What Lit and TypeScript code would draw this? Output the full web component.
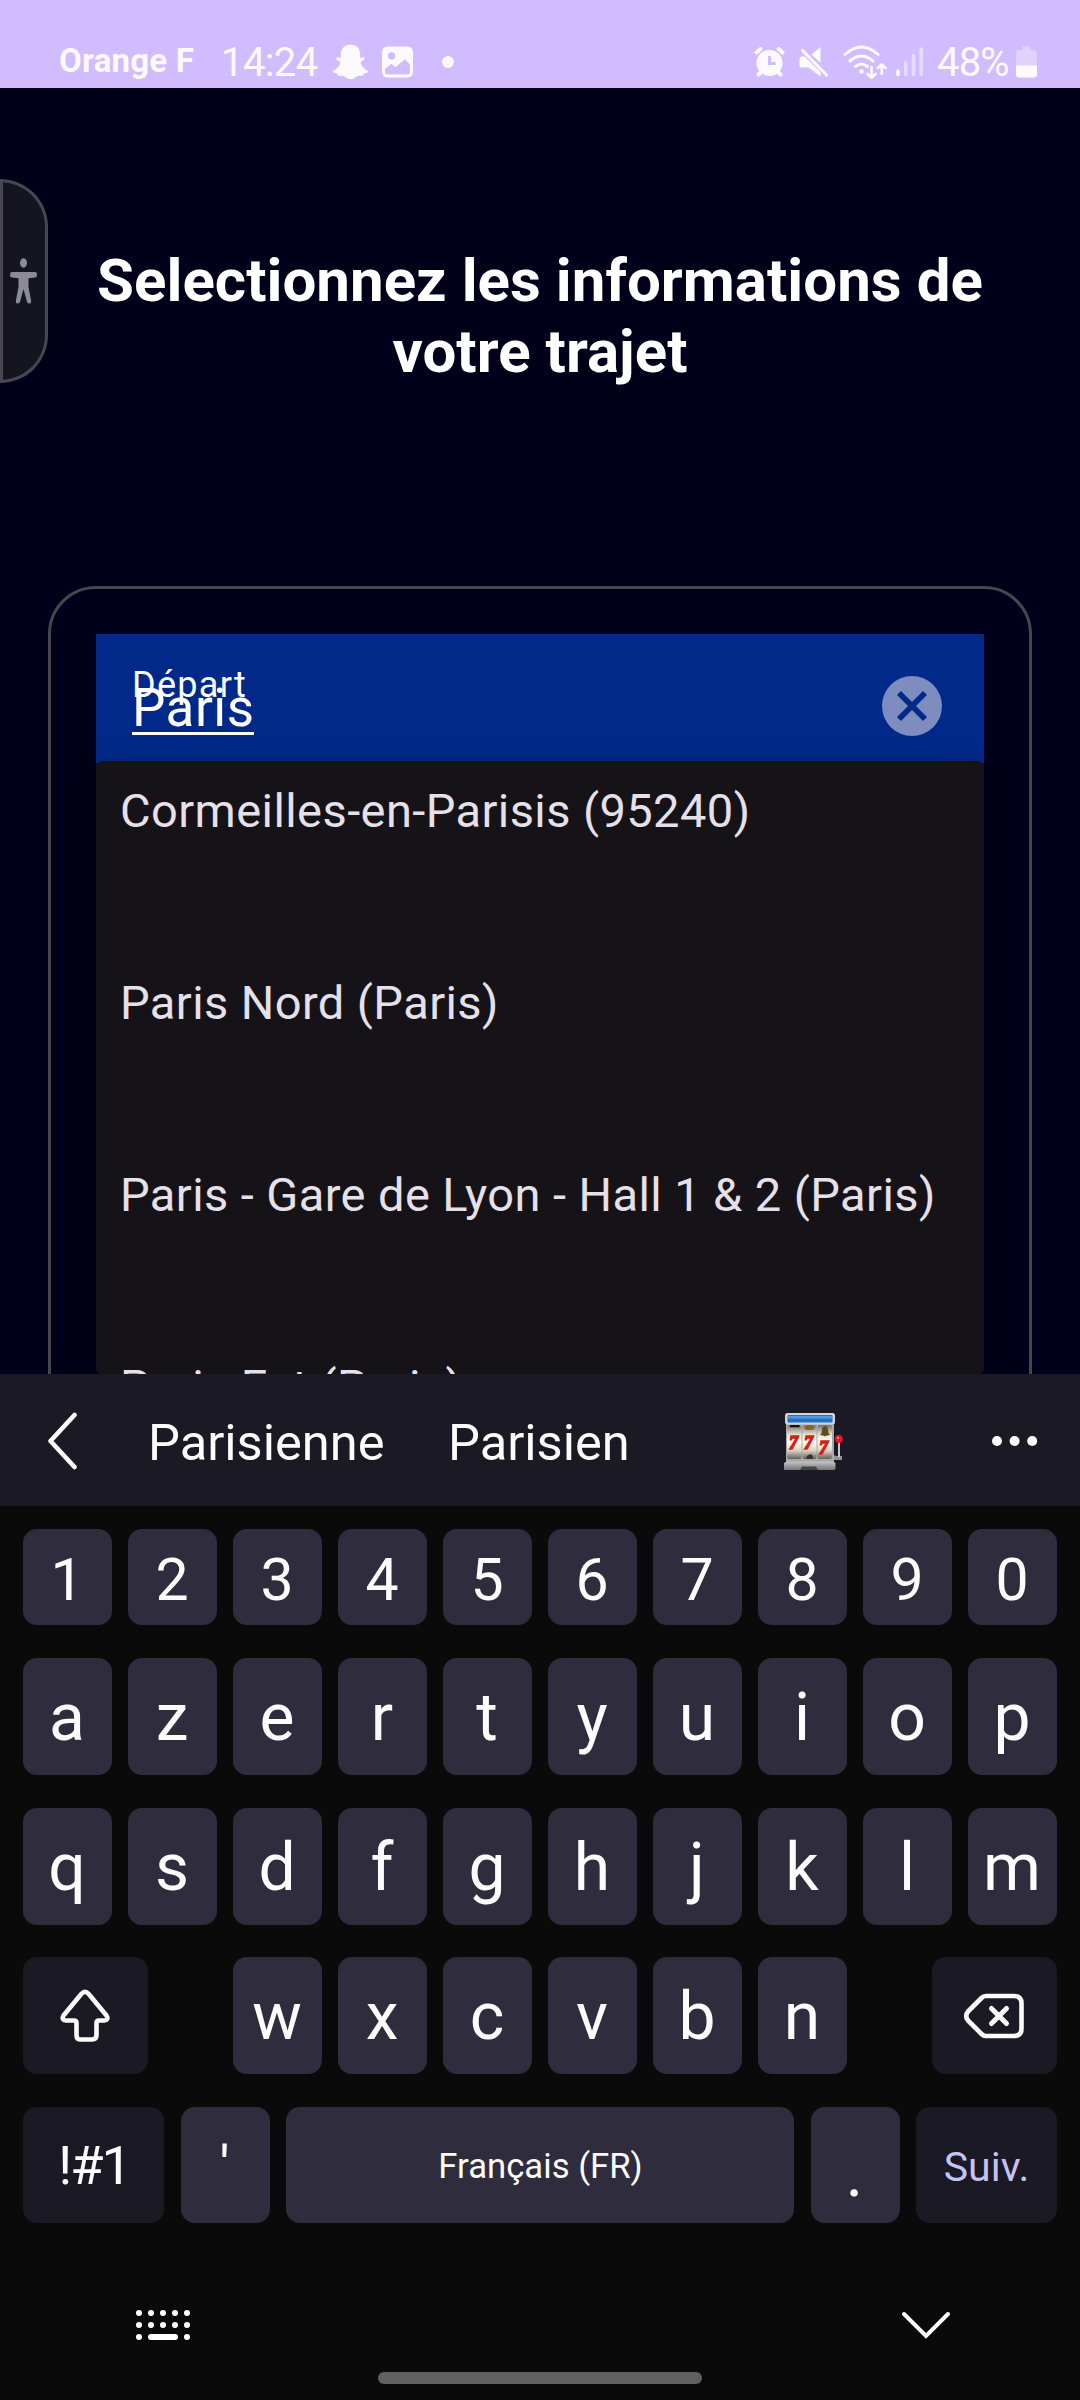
import { LitElement, html, css, svg } from "lit";
import { customElement, property } from "lit/decorators.js";
import { classMap } from "lit/directives/class-map.js";

@customElement("status-bar")
class StatusBar extends LitElement {
  static styles = css`
    :host { display: block; height: 88px; background: #d1bcff; color: #fdfaff; font-family: Roboto, "Noto Sans", sans-serif; }
    .bar { display: flex; justify-content: space-between; align-items: center; box-sizing: border-box; height: 88px; padding: 36px 43px 0 59px; }
    .group { display: flex; align-items: center; height: 52px; }
    .carrier { width: 162px; font-size: 33px; font-weight: 700; letter-spacing: 0.200px; line-height: 48px; white-space: nowrap; padding-bottom: 2px; }
    .clock { width: 111px; font-size: 40px; letter-spacing: -0.600px; line-height: 52px; white-space: nowrap; padding-top: 1px; }
    .level { width: 79px; font-size: 40px; letter-spacing: -0.800px; line-height: 52px; white-space: nowrap; padding-top: 1px; }
    svg { display: block; flex: none; }
    .photo { margin-left: 13px; }
    .dot { margin-left: 29px; width: 12px; height: 12px; border-radius: 50%; background: #fdfaff; }
    .mute { margin-left: 14px; }
    .wifi { margin-left: 14px; }
    .signal { margin-left: 9px; margin-right: 13px; }
  `;
  render() {
    return html`
      <div class="bar">
        <div class="group">
          <span class="carrier">Orange F</span>
          <span class="clock">14:24</span>
          <svg width="37" height="36" viewBox="0 0 37 36" fill="#fdfaff">
            <path d="M18.500 0.500C13 0.500 8.800 4.500 8.800 10V14.500C7 13.500 5 12.700 4.200 14.200C3.700 15.700 7.500 16.600 8.300 18.200C8.500 21.500 4 25.500 0.700 27.200C0.500 28.700 3.500 29.200 5.200 29.600C5.600 30.600 5.500 31.600 6.500 31.800C8.500 31.900 10 31.200 12 32.200C14.200 33.500 15.500 35.300 18.500 35.300S22.800 33.500 25 32.200C27 31.200 28.500 31.900 30.500 31.800C31.500 31.600 31.400 30.600 31.800 29.600C33.500 29.200 36.500 28.700 36.300 27.200C33 25.500 28.500 21.500 28.700 18.200C29.500 16.600 33.300 15.700 32.800 14.200C32 12.700 30 13.500 28.200 14.500V10C28.200 4.500 24 0.500 18.500 0.500Z"/>
          </svg>
          <svg class="photo" width="31" height="32" viewBox="0 0 31 32">
            <path fill="#fdfaff" fill-rule="evenodd" d="M6 0.500H25Q31 0.500 31 6.500V25.500Q31 31.500 25 31.500H6Q0 31.500 0 25.500V6.500Q0 0.500 6 0.500ZM9.500 6.300A3.600 3.600 0 1 0 9.500 13.500A3.600 3.600 0 1 0 9.500 6.300ZM3 23L9.500 17.700L13.500 21.200L22.800 13.300L28 18.500V26Q28 28.500 25.500 28.500H5.500Q3 28.500 3 26Z"/>
          </svg>
          <span class="dot"></span>
        </div>
        <div class="group">
          <svg width="31" height="32" viewBox="0 0 31 32" fill="none" stroke="#fdfaff" stroke-linecap="round">
            <circle cx="15.500" cy="17" r="13" fill="#fdfaff" stroke="none"/>
            <path d="M2.500 6.500L6.500 3M28.500 6.500L24.500 3" stroke-width="4"/>
            <path d="M7 26L4.500 28.500M24 26L26.500 28.500" stroke-width="4"/>
            <path d="M15.500 10V17.500H21.500" stroke="#d1bcff" stroke-width="3" stroke-linecap="butt"/>
          </svg>
          <svg class="mute" width="30" height="32" viewBox="0 0 30 32">
            <path d="M21.500 1V17L12.500 8.500ZM0.500 13Q0.500 10.500 3 10.500H5.500L21.500 26V30.500L9.500 21.500H3Q0.500 21.500 0.500 19Z" fill="#fdfaff"/>
            <path d="M3.500 4.500L27.500 29" stroke="#fdfaff" stroke-width="3.200" stroke-linecap="round"/>
          </svg>
          <svg class="wifi" width="44" height="36" viewBox="0 0 44 36" fill="none" stroke="#fdfaff" stroke-width="3" stroke-linecap="round" stroke-linejoin="round">
            <path d="M2 10.500Q18.500 -4.500 35 10.500M7 17Q18.500 7 30 17M12.500 22.500Q18.500 17.500 24.500 22.500"/>
            <circle cx="18.500" cy="27.500" r="2.300" fill="#fdfaff" stroke="none"/>
            <path d="M28.500 23V33.500M24.500 30L28.500 33.700L32.500 30M38.800 30V20.500M34.800 24L38.800 20.300L42.500 24" stroke-width="2.600"/>
          </svg>
          <svg class="signal" width="28" height="32" viewBox="0 0 28 32" stroke-width="3.600" stroke-linecap="round" stroke="#e7daff">
            <path d="M2 25V28.500" stroke="#fdfaff"/>
            <path d="M9.700 17V28.500M17.500 9.500V28.500M25.200 3V28.500"/>
          </svg>
          <span class="level">48%</span>
          <svg width="21" height="32" viewBox="0 0 21 32">
            <path d="M6.500 0.500H14.500V4H18Q21 4 21 7V28.500Q21 31.500 18 31.500H3Q0 31.500 0 28.500V7Q0 4 3 4H6.500Z" fill="#e0d2ff"/>
            <path d="M0 19.500H21V28.500Q21 31.500 18 31.500H3Q0 31.500 0 28.500Z" fill="#fdfaff"/>
          </svg>
        </div>
      </div>`;
  }
}

@customElement("trip-form")
class TripForm extends LitElement {
  @property({ type: Array }) places: string[] = [];
  static styles = css`
    :host { display: block; position: relative; box-sizing: border-box; height: 1286px; padding-top: 157px; overflow: hidden; background: #00001a; font-family: Roboto, "Noto Sans", sans-serif; }
    .handle { position: absolute; left: 0; top: 91px; box-sizing: border-box; width: 48px; height: 204px; border: 3px solid #474652; border-radius: 0 48px 48px 0; background: #15151f; display: flex; align-items: center; padding-left: 6px; }
    h1 { margin: 0 auto; width: 940px; font-size: 60px; letter-spacing: 0.040px; line-height: 71px; font-weight: 700; color: #fff; text-align: center; }
    .card { box-sizing: border-box; margin: 199px 48px 0; height: 900px; border: 3px solid #49454f; border-radius: 48px; padding: 45px; }
    .field { display: flex; align-items: center; justify-content: space-between; box-sizing: border-box; height: 130px; padding: 14px 42px 0 36px; background: #002989; color: #fff; }
    .entry { position: relative; width: 400px; height: 116px; }
    .label { position: absolute; left: 0; top: 15px; font-size: 36px; letter-spacing: 1.300px; line-height: 44px; }
    .value { display: inline-block; margin-top: 30px; font-size: 53px; letter-spacing: 0.450px; line-height: 61px; border-bottom: 3px solid #fff; height: 54px; }
    .list { position: relative; box-sizing: border-box; height: 613px; margin: -3px 0 0; padding: 14px 24px 0; overflow: hidden; list-style: none; border-radius: 6px; background: #151218; color: #e6e0e9; }
    .shade { position: relative; border-radius: 6px; box-shadow: 0 8px 30px rgba(0, 0, 0, 0.220); }
    .place { height: 192px; font-size: 47px; letter-spacing: 0.420px; line-height: 72px; white-space: nowrap; }
  `;
  render() {
    return html`
      <div class="handle">
        <svg width="29" height="47" viewBox="0 0 29 47" fill="#8b8a96">
          <ellipse cx="14.500" cy="5" rx="3.500" ry="4.700"/>
          <path d="M3 14H26Q28 14 28 17Q28 19.500 26 19.500L19.500 20.300V29L22.200 43Q22.300 45.500 20.500 45.500T18 44L14.500 31L11 44Q10.300 45.500 8.500 45.500T6.800 43L9.500 29V20.300L3 19.500Q1 19.500 1 17Q1 14 3 14Z"/>
        </svg>
      </div>
      <h1>Selectionnez les informations de votre trajet</h1>
      <section class="card">
        <div class="field">
          <div class="entry">
            <span class="label">Départ</span>
            <span class="value">Paris</span>
          </div>
          <svg width="60" height="60" viewBox="0 0 60 60">
            <circle cx="30" cy="30" r="30" fill="#7e8cc0"/>
            <path d="M17 17L43 43M43 17L17 43" stroke="#002989" stroke-width="5.600"/>
          </svg>
        </div>
        <div class="shade">
          <ul class="list">${this.places.map((p) => html`<li class="place">${p}</li>`)}</ul>
        </div>
      </section>`;
  }
}

const slotMachine = svg`
  <defs>
    <linearGradient id="reel" x1="0" y1="0" x2="0" y2="1">
      <stop offset="0" stop-color="#77746a"/><stop offset="0.300" stop-color="#e9e5d8"/>
      <stop offset="0.500" stop-color="#fffdf2"/><stop offset="0.750" stop-color="#d9d5c6"/><stop offset="1" stop-color="#625f55"/>
    </linearGradient>
    <linearGradient id="base" x1="0" y1="0" x2="0" y2="1">
      <stop offset="0" stop-color="#c4c5c9"/><stop offset="1" stop-color="#747577"/>
    </linearGradient>
  </defs>
  <rect x="2" y="9" width="48" height="41" fill="#a8a9ad"/>
  <rect x="1" y="0" width="50" height="11.500" rx="2.500" fill="#d3d4da"/>
  <rect x="3.500" y="2" width="45" height="7.500" rx="1" fill="#256fc4"/>
  <rect x="4" y="3" width="44" height="2.500" fill="#5199e4"/>
  <rect x="3" y="12" width="14.500" height="34" rx="2" fill="url(#reel)"/>
  <rect x="18.500" y="12" width="14" height="34" rx="2" fill="url(#reel)"/>
  <rect x="33.500" y="12" width="14.500" height="34" rx="2" fill="url(#reel)"/>
  <rect x="6" y="12" width="9.500" height="2.300" fill="#15110c"/>
  <path d="M20.500 15.500Q21 12 25.500 12T30.500 15.500L28 17H23Z" fill="#82632c"/>
  <path d="M36 22Q38 20 38 17Q38 13 41 13T44 17Q44 20 46 22L43 22.500Q41 24 39 22.500Z" fill="#5e4d22"/>
  <path d="M22 46Q22 42.500 25.500 41.500T29 46Z" fill="#38332c"/>
  <path d="M0 57V50L2.500 48.500H49L51.500 50V55Q51.500 57 49.500 57Z" fill="url(#base)"/>
  <path d="M16 57L18 53.500H32L34 57Z" fill="#444548"/>
  <path d="M52 43H58V47H50V42Z" fill="#929397"/>
  <path d="M55 28V44" stroke="#c8c9cd" stroke-width="2"/>
  <circle cx="54.800" cy="26" r="3.900" fill="#e71822"/>
  <circle cx="54" cy="24.800" r="1.100" fill="#ff9c9c"/>`;

@customElement("suggestion-strip")
class SuggestionStrip extends LitElement {
  static styles = css`
    :host { display: block; height: 132px; background: #1b1923; color: #fcfcfc; font-family: Roboto, "Noto Sans", sans-serif; }
    .strip { display: flex; align-items: center; height: 132px; padding-left: 46px; }
    .word { font-size: 50.600px; line-height: 60px; padding-top: 5px; white-space: nowrap; }
    .first { margin-left: 69px; width: 300px; }
    .second { width: 336px; }
    .reels { font: italic 700 18px "Liberation Serif", serif; fill: #e9201a; stroke: #d81c16; stroke-width: 1.500px; }
    svg { flex: none; }
    .slots { margin-top: 4px; }
    .more { margin-left: 147px; margin-top: 1px; }
  `;
  render() {
    return html`
      <div class="strip">
        <svg width="33" height="60" viewBox="0 0 33 60" fill="none" stroke="#fcfcfc" stroke-width="4.600" stroke-linecap="round" stroke-linejoin="round"><path d="M28.500 5L4.500 31L28.500 57"/></svg>
        <span class="word first">Parisienne</span>
        <span class="word second">Parisien</span>
        <svg class="slots" width="60" height="58" viewBox="0 0 60 58">
          ${slotMachine}
          <g class="reels"><text x="5" y="35.500">7</text><text x="20" y="35.500">7</text><text x="35" y="41">7</text></g>
        </svg>
        <svg class="more" width="48" height="12" viewBox="0 0 48 12" fill="#fcfcfc"><circle cx="6" cy="6" r="5"/><circle cx="23.600" cy="6" r="5"/><circle cx="41.200" cy="6" r="5"/></svg>
      </div>`;
  }
}

@customElement("soft-keyboard")
class SoftKeyboard extends LitElement {
  static styles = css`
    :host { display: block; box-sizing: border-box; height: 894px; padding: 23px 23px 0; background: #0a0a0a; color: #fcfcfc; font-family: Roboto, "Noto Sans", sans-serif; }
    .row { display: flex; justify-content: space-between; height: 117px; margin-bottom: 32.700px; }
    .digits { height: 96px; margin-bottom: 33px; }
    .key { display: flex; align-items: center; justify-content: center; box-sizing: border-box; width: 89px; border-radius: 14px; background: #2f2d3d; font-size: 66px; line-height: 78px; padding: 3px 1px 0 0; }
    .digits .key { font-size: 59px; padding-top: 5px; }
    .group { display: flex; gap: 16px; }
    .row .dark { background: #1b1923; }
    .side { width: 125px; padding: 0 1px 0 0; }
    .symbols { width: 141px; font-size: 54px; letter-spacing: -2px; padding: 1px 0 0 1px; }
    .next { width: 141px; font-size: 41px; color: #c5c3f5; padding: 4px 0 0; }
    .space { width: 508px; font-size: 34.700px; padding: 2px 0 0 1px; }
    .quote { font-size: 58px; padding-top: 4px; }
    .stop { padding-top: 18px; }
    .last { margin-bottom: 0; height: 116px; }
    .tools { display: flex; justify-content: space-between; align-items: center; height: 40px; margin: 82px 106px 0 112px; }
    .home { width: 324px; height: 12px; margin: 27px auto 0; border-radius: 6px; background: #606060; }
  `;
  private row(keys: string, digits = false) {
    return html`<div class=${classMap({ row: true, digits })}>${[...keys].map((k) => html`<div class="key">${k}</div>`)}</div>`;
  }
  render() {
    const dots = [0, 1, 2, 3, 4];
    return html`
      ${this.row("1234567890", true)}
      ${this.row("azertyuiop")}
      ${this.row("qsdfghjklm")}
      <div class="row">
        <div class="key dark side">
          <svg width="52" height="54" viewBox="0 0 52 54" fill="none" stroke="#fcfcfc" stroke-width="4.600" stroke-linejoin="round"><path d="M22.500 4.800Q26 1 29.500 4.800L47.500 26.500Q50 31 45.500 31.500H40Q37.500 31.500 37.500 34V46Q37.500 50.500 33 50.500H21Q17.500 50.500 17.500 46V34Q17.500 31.500 15 31.500H7Q2 31 4.500 26.500Z"/></svg>
        </div>
        <div class="group">${[..."wxcvbn"].map((k) => html`<div class="key">${k}</div>`)}</div>
        <div class="key dark side">
          <svg width="62" height="48" viewBox="0 0 62 48" fill="none" stroke="#fcfcfc" stroke-width="4.600" stroke-linecap="round" stroke-linejoin="round"><path d="M23 4H51Q58.500 4 58.500 11.500V36.500Q58.500 44 51 44H23Q20.500 44 18.500 42L5 28.500Q1.500 24 5 19.500L18.500 6Q20.500 4 23 4Z"/><path d="M28.500 16.500L43.500 31.500M43.500 16.500L28.500 31.500" stroke-width="5"/></svg>
        </div>
      </div>
      <div class="row last">
        <div class="key dark symbols">!#1</div>
        <div class="key quote">'</div>
        <div class="key space">Français (FR)</div>
        <div class="key stop">.</div>
        <div class="key dark next">Suiv.</div>
      </div>
      <div class="tools">
        <svg width="56" height="34" viewBox="0 0 56 34" fill="#fff">
          ${dots.map((i) => svg`<circle cx=${4 + i * 12} cy="5" r="3"/><circle cx=${4 + i * 12} cy="17" r="3"/>`)}
          <circle cx="4" cy="29" r="3"/><rect x="13" y="26" width="30" height="6" rx="3"/><circle cx="52" cy="29" r="3"/>
        </svg>
        <svg width="50" height="30" viewBox="0 0 50 30" fill="none" stroke="#fff" stroke-width="4" stroke-linecap="round"><path d="M3 4L25 26L47 4"/></svg>
      </div>
      <div class="home"></div>`;
  }
}

@customElement("app-root")
class AppRoot extends LitElement {
  static styles = css`
    :host { display: flex; flex-direction: column; width: 1080px; height: 2400px; overflow: hidden; background: #0a0a0a; }
  `;
  private places = ["Cormeilles-en-Parisis (95240)", "Paris Nord (Paris)", "Paris - Gare de Lyon - Hall 1 & 2 (Paris)", "Paris Est (Paris)"];
  render() {
    return html`
      <status-bar></status-bar>
      <trip-form .places=${this.places}></trip-form>
      <suggestion-strip></suggestion-strip>
      <soft-keyboard></soft-keyboard>`;
  }
}
